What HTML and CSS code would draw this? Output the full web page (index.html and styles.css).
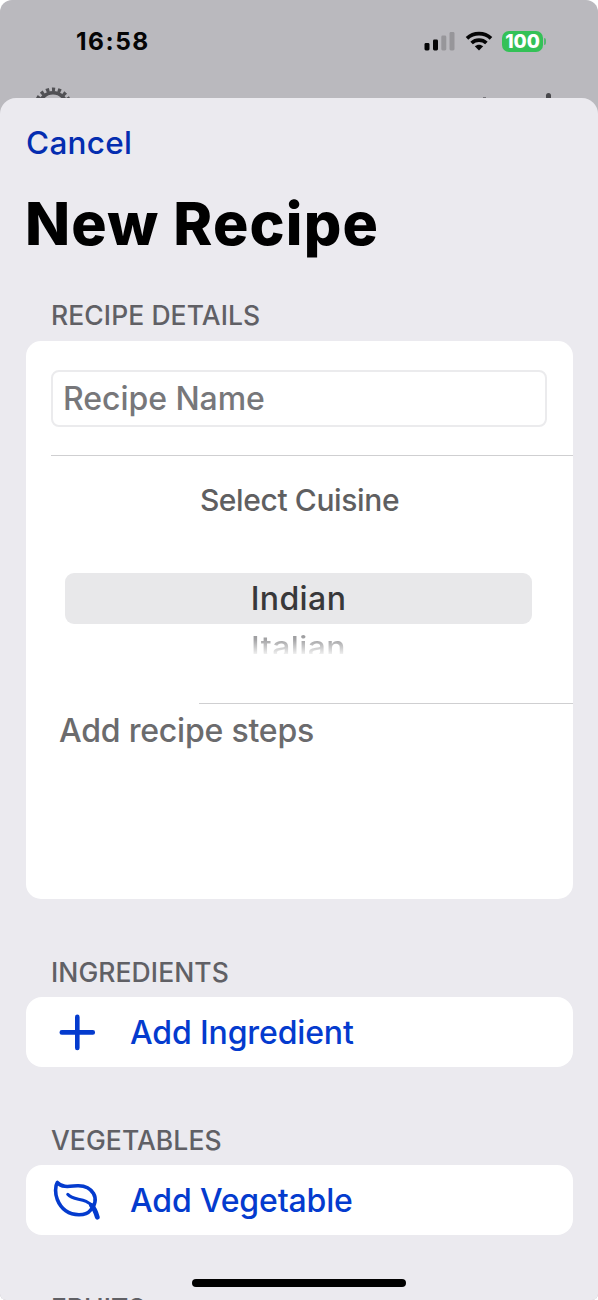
FILE: index.html
```html
<!DOCTYPE html>
<html lang="en">
<head>
<meta charset="utf-8">
<title>New Recipe</title>
<link rel="stylesheet" href="styles.css">
</head>
<body>
<div class="screen">
  <header class="backdrop">
    <div class="status">
      <span class="time">16:58</span>
      <svg class="signal" width="32" height="20" viewBox="0 0 32 20">
        <rect x="0.5" y="12" width="5" height="7.5" rx="1.4" fill="#050506"/>
        <rect x="9" y="8.5" width="5" height="11" rx="1.4" fill="#050506"/>
        <rect x="17.3" y="4.5" width="5" height="15" rx="1.4" fill="#97969a"/>
        <rect x="25.5" y="1" width="5" height="18.5" rx="1.4" fill="#97969a"/>
      </svg>
      <svg class="wifi" width="28" height="20" viewBox="0 0 28 20">
        <g fill="none" stroke="#050506" stroke-width="3.7">
          <path d="M2 7.3C8.6 1.1 19.4 1.1 26 7.3"/>
          <path d="M6.6 12C10.8 8.1 17.2 8.1 21.4 12"/>
        </g>
        <path d="M9.8 15.3C12.2 13.2 15.8 13.2 18.2 15.3L14 19.6Z" fill="#050506"/>
      </svg>
      <span class="battery">100</span>
      <span class="battery-cap"></span>
    </div>
    <div class="toolbar">
      <svg width="42" height="12" viewBox="0 0 42 12">
        <circle cx="21" cy="20.5" r="13.7" fill="none" stroke="#515155" stroke-width="3.6"/>
        <circle cx="21" cy="20.5" r="17" fill="none" stroke="#515155" stroke-width="4" stroke-dasharray="3.2 2.734" stroke-dashoffset="-1.4"/>
      </svg>
      <span class="speck"></span>
      <span class="plus-tip"></span>
    </div>
  </header>
  <main class="sheet">
    <a class="cancel">Cancel</a>
    <h1 class="title">New Recipe</h1>

    <h2 class="label label-first">RECIPE DETAILS</h2>
    <section class="card details">
      <div class="field">Recipe Name</div>
      <div class="rule"></div>
      <div class="cuisine">Select Cuisine</div>
      <div class="option selected">Indian</div>
      <div class="option next">Italian</div>
      <div class="rule rule-short"></div>
      <div class="steps">Add recipe steps</div>
    </section>

    <h2 class="label">INGREDIENTS</h2>
    <section class="card action">
      <svg width="50" height="48" viewBox="0 0 50 48" fill="none" stroke="#043bce" stroke-width="4.6" stroke-linecap="round">
        <path d="M25.3 8.9V40M9.8 24.4H40.8"/>
      </svg>
      <span class="add-ingredient">Add Ingredient</span>
    </section>

    <h2 class="label">VEGETABLES</h2>
    <section class="card action">
      <svg width="50" height="48" viewBox="0 0 50 48" fill="none" stroke="#043bce" stroke-width="3.6" stroke-linecap="round" stroke-linejoin="round">
        <path d="M5.3 6.5C3 10 3 18 5.3 23.500C9 33 17 38.700 27 38.700C32 38.700 36 37.500 38.200 34.500C43.500 29.500 44.500 22.500 41.500 17.500C38 11.500 31.500 9.500 25.500 9.700C19 10 10.500 12.500 5.300 6.500Z"/>
        <path d="M15.700 18.300C21.500 25.500 33.500 20.800 41 31" stroke-width="3"/>
        <path d="M39.500 29.500C42.500 32.500 44 36.500 45.300 41.200" stroke-width="4.800"/>
      </svg>
      <span class="add-vegetable">Add Vegetable</span>
    </section>

    <h2 class="label">FRUITS</h2>
  </main>
  <div class="home-indicator"></div>
</div>
</body>
</html>
```

FILE: styles.css
```css
* { box-sizing: border-box; }

body {
  margin: 0;
  background: #fff;
  font-family: Inter, "Liberation Sans", sans-serif;
  font-weight: 500;
}

.screen {
  position: relative;
  width: 598px;
  height: 1300px;
  overflow: hidden;
  border-radius: 12px 12px 6px 6px;
  background: #bab9be;
}

.backdrop { height: 98px; }

.status {
  display: flex;
  align-items: center;
  height: 86px;
  padding: 0 0 4px 76px;
}

.time {
  width: 347px;
  font-size: 24.5px;
  font-weight: 700;
  letter-spacing: 1.5px;
  color: #050506;
}

.signal { margin-left: 1px; }
.wifi { margin-left: 9px; margin-top: -1px; }

.battery {
  width: 41px;
  height: 21px;
  margin-left: 9px;
  border-radius: 7px;
  background: #34c157;
  color: #fff;
  font-size: 19px;
  font-weight: 800;
  line-height: 21px;
  text-align: center;
}

.battery-cap {
  width: 2px;
  height: 7px;
  margin-left: 1px;
  border-radius: 0 3px 3px 0;
  background: #55b873;
}

.toolbar {
  display: flex;
  align-items: flex-end;
  height: 12px;
  padding-left: 32px;
}

.toolbar svg { display: block; }

.speck {
  width: 3px;
  height: 1px;
  margin-left: 409px;
  background: #77767b;
}

.plus-tip {
  width: 5px;
  height: 5px;
  margin-left: 60px;
  border-radius: 2.5px 2.5px 0 0;
  background: #48484c;
}

.sheet {
  height: 1202px;
  padding: 26px 26px 0;
  border-radius: 16px 16px 0 0;
  background: #ebeaef;
  overflow: hidden;
}

.cancel {
  display: block;
  font-size: 31.5px;
  line-height: 38px;
  letter-spacing: 0.28px;
  color: #042db0;
}

.title {
  margin: 26px 0 0 -1px;
  font-size: 59px;
  font-weight: 800;
  line-height: 72px;
  letter-spacing: 1.16px;
  color: #000;
}

.label {
  margin: 57px 0 9px 25px;
  font-size: 26.5px;
  font-weight: 500;
  line-height: 32px;
  letter-spacing: 0.08px;
  color: #606065;
}

.label-first { margin: 39px 0 10px 25px; }

.card {
  width: 547px;
  background: #fff;
}

.details {
  height: 558px;
  padding-top: 29px;
  border-radius: 15px;
}

.field {
  width: 496px;
  height: 57px;
  margin-left: 25px;
  padding-left: 10px;
  border: 2px solid #ebebed;
  border-radius: 8px;
  font-size: 32px;
  line-height: 53px;
  letter-spacing: -0.05px;
  color: #77777a;
}

.rule {
  height: 1px;
  margin: 28px 0 0 25px;
  background: #cfcfd1;
}

.cuisine {
  margin-top: 24px;
  font-size: 30px;
  line-height: 40px;
  letter-spacing: -0.39px;
  text-align: center;
  color: #5f5f61;
}

.option {
  width: 467px;
  margin-left: 39px;
  font-size: 32px;
  text-align: center;
}

.selected {
  height: 51px;
  margin-top: 53px;
  border-radius: 9px;
  background: #e8e8ea;
  line-height: 51px;
  letter-spacing: 0.4px;
  color: #38383a;
}

.next {
  height: 32px;
  line-height: 48px;
  font-size: 32px;
  letter-spacing: 0.4px;
  color: transparent;
  background: linear-gradient(#9b9b9d 10px, #a5a5a7 16px, #eee 32px);
  background-clip: text;
  transform: scaleY(0.87);
}

.rule-short { margin: 47px 0 0 173px; }

.steps {
  margin-left: 33px;
  font-size: 32px;
  line-height: 54px;
  letter-spacing: -0.21px;
  color: #6b6b6d;
}

.action {
  display: flex;
  align-items: center;
  height: 70px;
  padding-left: 26px;
  border-radius: 16px;
  font-size: 32px;
  color: #043bce;
}

.action span { margin-left: 28px; }
.add-ingredient { letter-spacing: -0.14px; }
.add-vegetable { letter-spacing: -0.16px; }

/* Floats over the scrolling form */
.home-indicator {
  position: absolute;
  left: 192px;
  bottom: 13px;
  width: 214px;
  height: 8px;
  border-radius: 4px;
  background: #000;
}
```
